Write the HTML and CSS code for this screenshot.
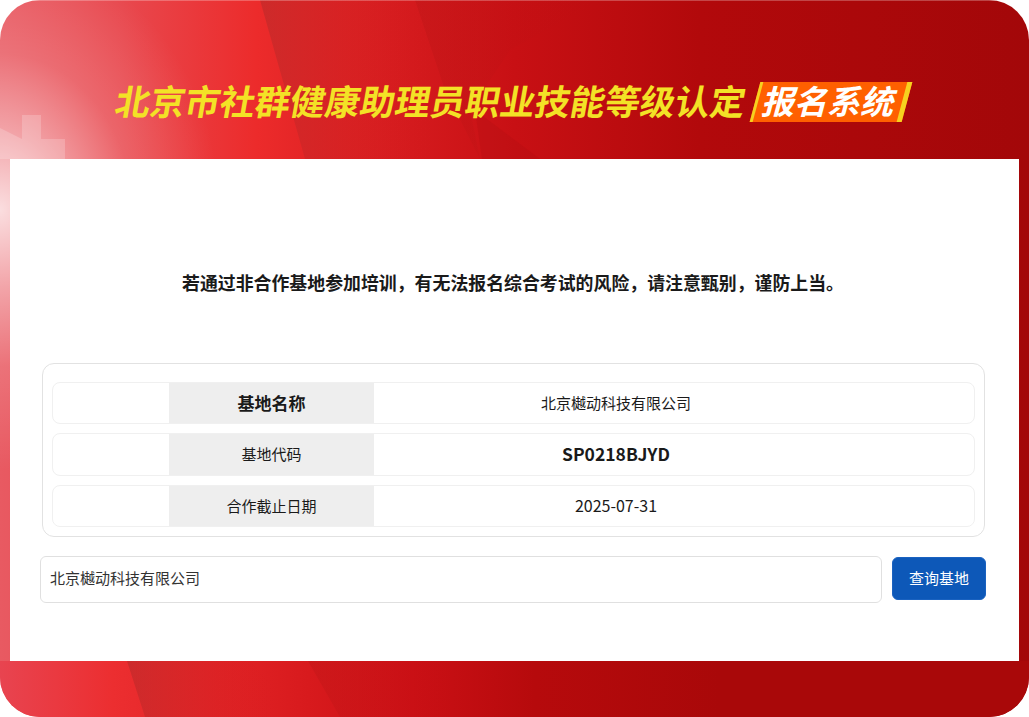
FILE: index.html
```html
<!DOCTYPE html>
<html lang="zh-CN">
<head>
<meta charset="utf-8">
<title>北京市社群健康助理员职业技能等级认定 报名系统</title>
<link rel="stylesheet" href="styles.css">
</head>
<body>
<div class="frame">
  <svg class="backdrop" width="1029" height="717" viewBox="0 0 1029 717" aria-hidden="true">
    <defs>
      <linearGradient id="base" x1="0" y1="0" x2="1029" y2="0" gradientUnits="userSpaceOnUse">
        <stop offset="0" stop-color="#e85a62"/>
        <stop offset="0.12" stop-color="#e8484e"/>
        <stop offset="0.25" stop-color="#ec2b2b"/>
        <stop offset="0.4" stop-color="#d41a1d"/>
        <stop offset="0.5" stop-color="#c81014"/>
        <stop offset="0.68" stop-color="#b2090b"/>
        <stop offset="1" stop-color="#a30709"/>
      </linearGradient>
      <linearGradient id="bottom" x1="0" y1="0" x2="1029" y2="0" gradientUnits="userSpaceOnUse">
        <stop offset="0" stop-color="#e84450"/>
        <stop offset="0.11" stop-color="#ec2e30"/>
        <stop offset="0.3" stop-color="#d81a1d"/>
        <stop offset="0.4" stop-color="#cb1015"/>
        <stop offset="0.52" stop-color="#b60a0c"/>
        <stop offset="0.7" stop-color="#a90809"/>
        <stop offset="1" stop-color="#a90809"/>
      </linearGradient>
      <linearGradient id="facet1" x1="0" y1="0" x2="1" y2="0">
        <stop offset="0" stop-color="#b82a2a" stop-opacity=".6"/>
        <stop offset="0.8" stop-color="#d81a1d" stop-opacity="0"/>
      </linearGradient>
      <linearGradient id="facet2" x1="0" y1="0" x2="1" y2="0">
        <stop offset="0" stop-color="#b01414" stop-opacity=".28"/>
        <stop offset="1" stop-color="#c01015" stop-opacity="0"/>
      </linearGradient>
      <radialGradient id="glow" cx="0" cy="0" r="1" gradientUnits="userSpaceOnUse" gradientTransform="translate(0 210) scale(220 260)">
        <stop offset="0" stop-color="#ffffff" stop-opacity=".8"/>
        <stop offset="0.3" stop-color="#ffffff" stop-opacity=".45"/>
        <stop offset="0.6" stop-color="#ffffff" stop-opacity=".15"/>
        <stop offset="1" stop-color="#ffffff" stop-opacity="0"/>
      </radialGradient>
    </defs>
    <rect width="1029" height="717" fill="url(#base)"/>
    <rect y="661" width="1029" height="56" fill="url(#bottom)"/>
    <polygon points="260,0 420,0 480,159 305,159" fill="url(#facet1)"/>
    <polygon points="415,0 600,0 510,50 470,110 480,159 445,90" fill="url(#facet2)"/>
    <polygon points="475,110 540,159 482,159" fill="#a80f12" fill-opacity=".22"/>
    <polygon points="127,661 250,661 310,717 145,717" fill="url(#facet1)"/>
    <polygon points="308,661 450,661 450,717 340,717" fill="url(#facet2)"/>
    <rect width="300" height="660" fill="url(#glow)"/>
    <polygon points="22,115 41,115 41,139 65,139 65,159 0,159 0,128 22,139" fill="#ffffff" fill-opacity=".2"/>
    <rect width="1029" height="1" fill="#ffffff" fill-opacity=".25"/>
  </svg>
  <header class="banner">
    <h1 class="title">北京市社群健康助理员职业技能等级认定</h1>
    <span class="badge"><span class="badge-text">报名系统</span></span>
  </header>
  <main class="panel">
    <p class="notice">若通过非合作基地参加培训，有无法报名综合考试的风险，请注意甄别，谨防上当。</p>
    <section class="result">
      <div class="row">
        <div class="label label-strong">基地名称</div>
        <div class="value">北京樾动科技有限公司</div>
      </div>
      <div class="row row-tall">
        <div class="label">基地代码</div>
        <div class="value value-strong">SP0218BJYD</div>
      </div>
      <div class="row">
        <div class="label">合作截止日期</div>
        <div class="value value-date">2025-07-31</div>
      </div>
    </section>
    <form class="search">
      <input class="search-input" type="text" value="北京樾动科技有限公司">
      <button class="search-btn" type="button">查询基地</button>
    </form>
  </main>
</div>
</body>
</html>
```
FILE: styles.css
```css
* { box-sizing: border-box; }
html, body { margin: 0; padding: 0; background: #fff; }
body {
  font-family: "Noto Sans CJK SC", "Noto Sans", sans-serif;
  color: #1a1a1a;
}
.frame {
  position: relative;
  width: 1029px;
  height: 717px;
  border-radius: 40px;
  overflow: hidden;
  padding: 0 10px 56px;
  display: flex;
  flex-direction: column;
}
.backdrop { position: absolute; left: 0; top: 0; }
.banner {
  position: relative;
  height: 159px;
  flex: none;
  display: flex;
  align-items: center;
  justify-content: center;
  gap: 8px;
  padding: 45px 6px 0 0;
}
.title {
  margin: 0 0 4px;
  font-size: 35px;
  line-height: 40px;
  font-weight: 700;
  color: #f3e226;
  white-space: nowrap;
  transform: skewX(-10deg);
}
.badge {
  display: block;
  width: 152px;
  height: 40px;
  background: #ff6000;
  border-left: 3px solid #f6d21f;
  border-right: 5px solid #f6d21f;
  transform: skewX(-15deg);
  text-align: center;
}
.badge-text {
  display: block;
  margin-top: -2px;
  font-size: 33px;
  line-height: 40px;
  font-weight: 700;
  color: #fff;
  white-space: nowrap;
}
.panel {
  position: relative;
  flex: 1;
  background: #fff;
  padding: 0 33px 0 30px;
  display: flex;
  flex-direction: column;
}
.notice {
  margin: 111px 0 0;
  text-align: center;
  font-size: 17.9px;
  line-height: 24px;
  font-weight: 700;
  color: #1a1a1a;
  white-space: nowrap;
}
.result {
  margin: 69px 0 0 2px;
  width: 943px;
  height: 174px;
  border: 1px solid #e2e2e2;
  border-radius: 12px;
  padding: 18px 9px 9px;
  display: flex;
  flex-direction: column;
  gap: 9px;
}
.row {
  height: 42px;
  flex: none;
  border: 1px solid #f0f0f0;
  border-radius: 8px;
  display: grid;
  grid-template-columns: 116px 205px 484px 116px;
  overflow: hidden;
}
.row-tall { height: 43px; }
.label {
  grid-column: 2;
  background: #eee;
  display: flex;
  align-items: center;
  justify-content: center;
  padding-bottom: 2px;
  font-size: 15px;
}
.label-strong { font-size: 17px; font-weight: 700; }
.value {
  display: flex;
  align-items: center;
  justify-content: center;
  padding-bottom: 2px;
  font-size: 15px;
}
.value-strong { font-size: 17.5px; font-weight: 700; }
.value-date { font-size: 16px; }
.search {
  margin-top: 19px;
  display: flex;
  align-items: flex-start;
  gap: 10px;
}
.search-input {
  width: 842px;
  height: 47px;
  border: 1px solid #e0e0e0;
  border-radius: 6px;
  padding: 0 9px 4px;
  font: 15px "Noto Sans CJK SC", "Noto Sans", sans-serif;
  color: #333;
  background: #fff;
  outline: none;
}
.search-btn {
  width: 94px;
  height: 43px;
  margin-top: 1px;
  padding: 0 0 2px;
  border: 1px solid #1a62c0;
  border-radius: 6px;
  background: #0d58b8;
  color: #fff;
  font: 15px "Noto Sans CJK SC", "Noto Sans", sans-serif;
}
```
